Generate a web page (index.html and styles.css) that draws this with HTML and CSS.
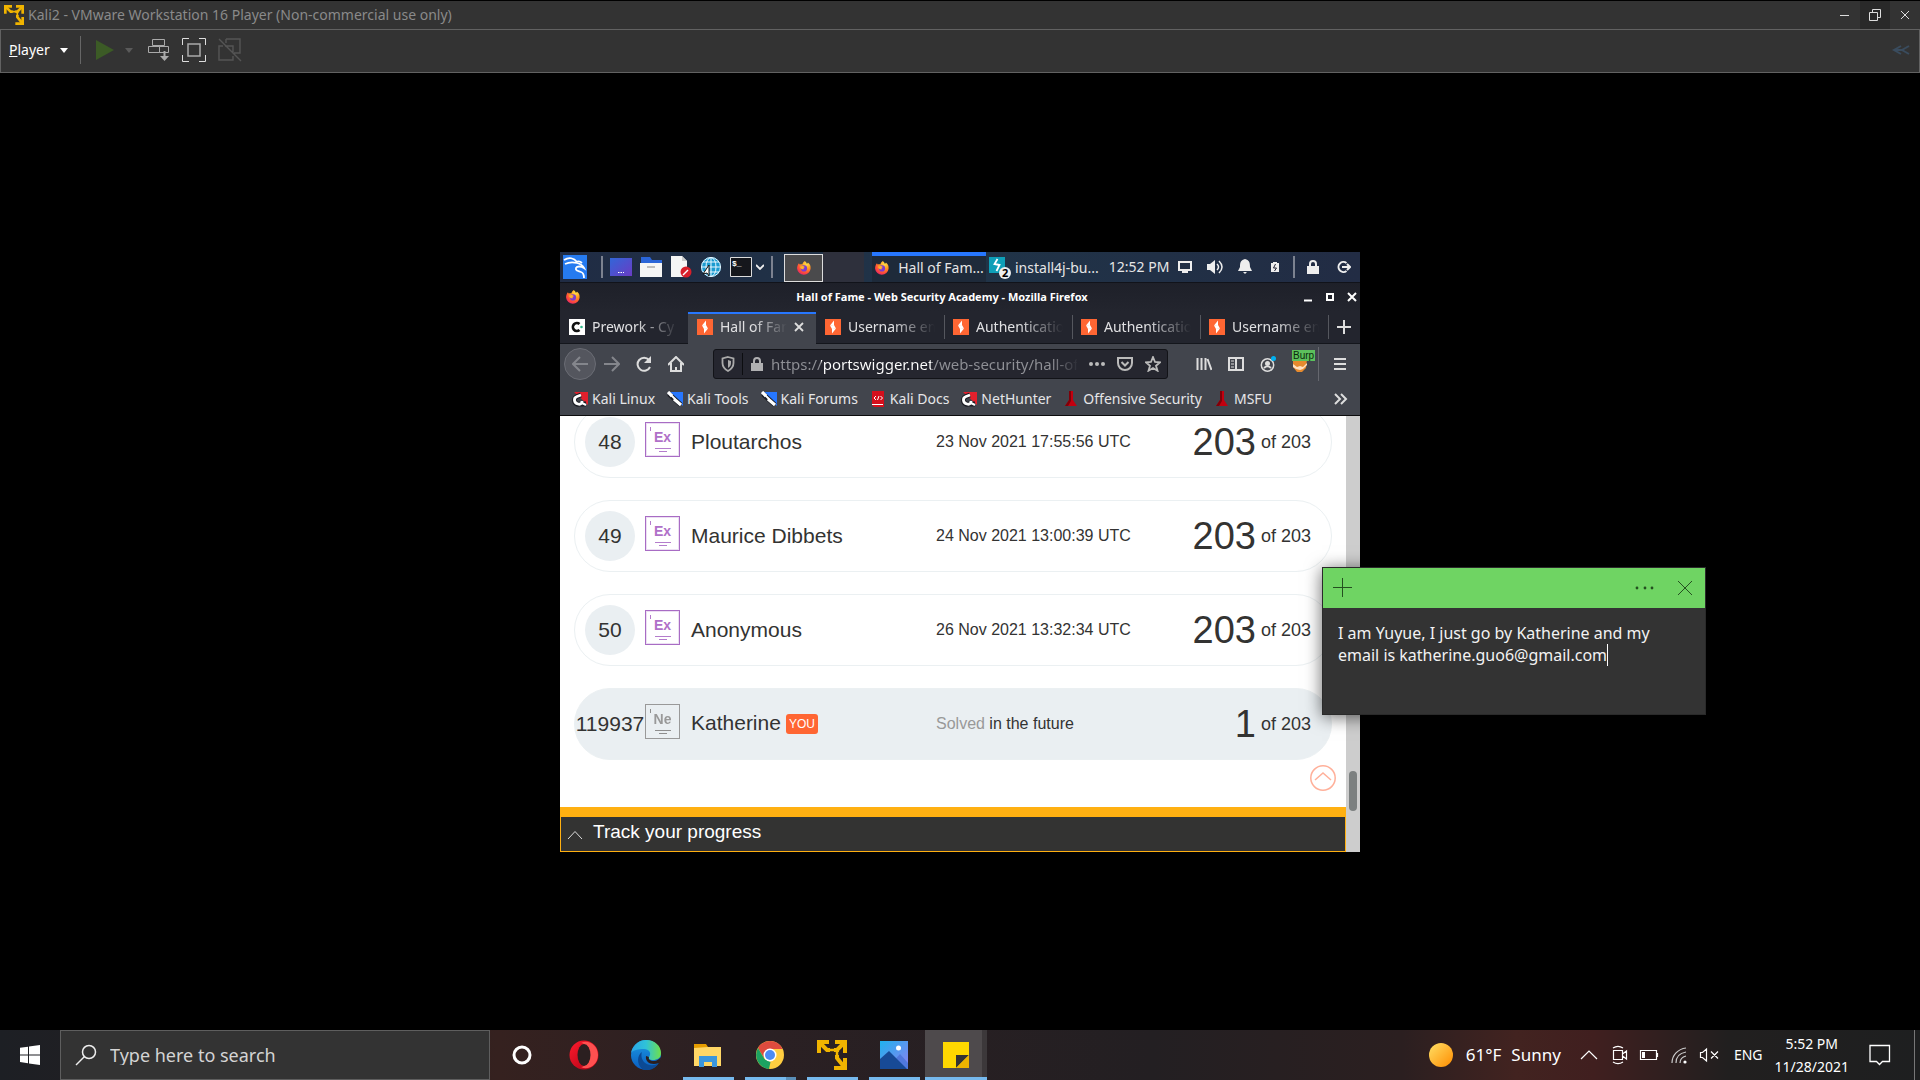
FILE: index.html
```html
<!DOCTYPE html>
<html lang="en">
<head>
<meta charset="utf-8">
<title>Kali2 - VMware Workstation 16 Player</title>
<link rel="stylesheet" href="styles.css">
</head>
<body>
<svg class="sprite" aria-hidden="true">
  <defs>
    <radialGradient id="fx-outer" cx=".7" cy=".2" r=".9"><stop offset="0" stop-color="#ffe14a"/><stop offset=".4" stop-color="#ff9a20"/><stop offset=".75" stop-color="#ff4a3a"/><stop offset="1" stop-color="#e3226e"/></radialGradient>
    <linearGradient id="desk" x2="1" y2="1"><stop offset="0" stop-color="#3266d8"/><stop offset="1" stop-color="#6a3cc4"/></linearGradient>
    <linearGradient id="opera-g" x2="1" y2="1"><stop offset="0" stop-color="#ff1b2d"/><stop offset="1" stop-color="#a70014"/></linearGradient>
    <linearGradient id="edge-top" x2="1"><stop offset="0" stop-color="#2aa5e8"/><stop offset=".5" stop-color="#2fc2d8"/><stop offset="1" stop-color="#6fe04a"/></linearGradient>
    <linearGradient id="edge-low" x2="0" y2="1"><stop offset="0" stop-color="#1d9be2"/><stop offset="1" stop-color="#0a5cc0"/></linearGradient>
    <linearGradient id="sun-g" x2="1" y2="1"><stop offset="0" stop-color="#ffe066"/><stop offset="1" stop-color="#ff8c00"/></linearGradient>
    <linearGradient id="sky" x2="1" y2="1"><stop offset="0" stop-color="#1fb2ee"/><stop offset="1" stop-color="#8d7ff0"/></linearGradient>
    <symbol id="vmware" viewBox="0 0 30 30"><g fill="none" stroke="#f0b400" stroke-width="4"><path d="M2 13V2h10M18 2h10v11M28 18v10H17"/><path d="M2 2l8 8h3M17 10h3l8-8M20 10v2M20 15v3l8 10"/><path d="M12 10h6M20 11v6" stroke-width="2.500"/></g></symbol>
    <symbol id="firefox" viewBox="0 0 16 16"><path d="M8.800 1c1.200.8 1.700 1.800 1.900 2.800.8-.1 1.200-.8 1.200-1.300 2 1.400 3 3.500 2.700 6.200A6.800 6.800 0 0 1 1.100 8.700C.9 6.500 1.700 4.400 3 3.200c.1.600.4 1 .8 1.400.9-.5 1.800-.4 2.500 0C6.700 3 7.500 1.800 8.800 1z" fill="url(#fx-outer)"/><circle cx="8" cy="8.400" r="3.100" fill="#7a3bd0"/><path d="M4.200 6.500C6 5.400 8 6 9 7.200 7.800 7 7.200 8 8 9.200c-2 .6-4-.6-3.800-2.700z" fill="#ffb02a"/></symbol>
    <symbol id="burp" viewBox="0 0 16 16"><path fill="#ff6633" d="M0 0h16v16H0z"/><path d="M9 1.500v5H5zM7 14.500v-5h4z" fill="#fff"/><path d="M5 6.500L9 6l2 3.500-4 .5z" fill="#fff"/></symbol>
    <symbol id="tools" viewBox="0 0 16 16"><path d="M2 1h14v14z" fill="#2777ff"/><path d="M2 3l12 11" stroke="#1b1d24" stroke-width="5"/><path d="M1 1l4 4M7 8l7 6" stroke="#fff" stroke-width="3.200"/><path d="M4 4l4 4" stroke="#fff" stroke-width="2"/></symbol>
    <symbol id="hunter" viewBox="0 0 16 16"><path d="M2 1h14v13z" fill="#e3202c"/><path d="M9 4L5 5.500a4 4 0 0 0 3 7.500l6 0" fill="none" stroke="#1b1d24" stroke-width="5"/><path d="M9 4L5 5.500C1 7 2 12 6 13c3 1 4-1 4-3" fill="none" stroke="#fff" stroke-width="2.800"/><path d="M10 12l4 2" stroke="#fff" stroke-width="2"/></symbol>
    <symbol id="offsec" viewBox="0 0 16 16"><path d="M6 0h4v9l4 6H2l4-6z" fill="#c2000f"/><path d="M6 0h2v10l-3 5H2l4-6z" fill="#7e0009"/></symbol>
  </defs>
</svg>

<header class="vm-head">
  <div class="vm-title">
    <svg class="i20"><use href="#vmware"/></svg>
    <h1>Kali2 - VMware Workstation 16 Player (Non-commercial use only)</h1>
    <div class="win-buttons">
      <button aria-label="Minimize"><svg class="i12" viewBox="0 0 12 12"><path d="M1 6.500h9"/></svg></button>
      <button class="restore" aria-label="Restore"><svg class="i12" viewBox="0 0 12 12"><path d="M.5 3.500h8v8h-8zM3.500 3V.5h8v8H9"/></svg></button>
      <button aria-label="Close"><svg class="i12" viewBox="0 0 12 12"><path d="M2 2l8 8M10 2l-8 8"/></svg></button>
    </div>
  </div>
  <div class="vm-tools">
    <button class="player"><span><u>P</u>layer</span><i class="caret"></i></button>
    <button class="play" aria-label="Power on"><svg width="18" height="20" viewBox="0 0 18 20"><path d="M0 0l18 10L0 20z" fill="#3c5b26"/></svg><i class="caret dim"></i></button>
    <button aria-label="Send Ctrl+Alt+Del"><svg width="22" height="24" viewBox="0 0 22 24" fill="none" stroke="#aaa"><path d="M4.500 1.500h12v6h-12zM.5 8.500h11v6H.5zM11.500 8.500h9v6h-9z"/><path d="M16.500 13v6" stroke-width="2"/><path d="M12 18h9l-4.500 5z" fill="#aaa" stroke="none"/></svg></button>
    <button aria-label="Full screen"><svg width="24" height="24" viewBox="0 0 24 24" fill="none" stroke="#ddd"><path d="M.5 7V.5H7M17 .5h6.500V7M23.500 17v6.500H17M7 23.500H.5V17"/><path d="M6 6h12v12H6z" stroke-width="1.500" stroke="#aaa"/></svg></button>
    <button aria-label="Unity"><svg width="24" height="24" viewBox="0 0 24 24" fill="none" stroke="#555" stroke-width="1.400"><path d="M1 1l22 22M8 1h14v14h-6M5 8H1v14h14v-4M8 5V1M7 8h8v7"/></svg></button>
    <svg class="collapse" width="18" height="12" viewBox="0 0 18 12" fill="none" stroke="#3a4c5e" stroke-width="2"><path d="M9 2L2 6l7 4M17 2l-7 4 7 4M3 6h9"/></svg>
  </div>
</header>

<main class="stage">
  <div class="guest">
    <div class="panel">
      <button class="launch" aria-label="Applications"><svg class="i24" viewBox="0 0 24 24"><path fill="#267bf0" d="M0 0h24v24H0z"/><g fill="none" stroke="#fff" stroke-width="1.800"><path d="M1 5c5-3 10-2 13 2M2 9c4-2 8-2 12-1 4 1 6 3 7 5-3-2-7-2-8 0-1 3 3 3 5 4 3 1 3 4 3 6"/><path d="M13 7c2-1 4-1 6 1"/></g></svg></button>
      <i class="bar"></i>
      <button class="launch" aria-label="Show desktop"><svg width="22" height="18" viewBox="0 0 22 18"><path fill="url(#desk)" d="M0 0h22v18H0z"/><path d="M8 14.500h6" stroke="#fff" stroke-dasharray="1.500 1"/></svg></button>
      <button class="launch" aria-label="Files"><svg width="24" height="20" viewBox="0 0 24 20"><path fill="#2a65d8" d="M2 0h9l2 3h10v8H2z"/><path fill="#f5f5f5" d="M1 6h22v14H1z"/><path d="M8 10h8" stroke="#aaa" stroke-width="1.500"/></svg></button>
      <button class="launch" aria-label="Text editor"><svg width="22" height="22" viewBox="0 0 22 22"><path fill="#f5f5f5" d="M1 0h11l5 5v16H1z"/><path fill="#ccc" d="M12 0l5 5h-5z"/><circle cx="16" cy="16" r="5.500" fill="#d81f2a"/><path d="M13 19l5-5" stroke="#fff" stroke-width="1.500"/></svg></button>
      <button class="launch" aria-label="Web browser"><svg width="22" height="22" viewBox="0 0 22 22"><circle cx="11" cy="11" r="10" fill="#1b9bd0"/><g fill="none" stroke="#e8f6ff"><circle cx="11" cy="11" r="9.500"/><ellipse cx="11" cy="11" rx="5" ry="9.500"/><path d="M11 1v20M1 11h20M3 6h16M3 16h16"/></g><path d="M9 9v11l-2-3-4 1z" fill="#fff" stroke="#111"/></svg></button>
      <button class="launch" aria-label="Terminal"><svg width="22" height="20" viewBox="0 0 22 20"><path d="M.5.5h21v19H.5z" fill="#15171c" stroke="#ddd"/><text x="2" y="9" class="mini-mono">$_</text></svg></button>
      <button class="chev" aria-label="More terminals"><svg width="8" height="6" viewBox="0 0 8 6" fill="none" stroke="#eee" stroke-width="1.800"><path d="M0 1l4 4 4-4"/></svg></button>
      <i class="bar"></i>
      <button class="space-now" aria-label="Firefox window"><svg class="i16"><use href="#firefox"/></svg></button>
      <div class="space-next"></div>
      <button class="task on"><svg class="i16"><use href="#firefox"/></svg><span>Hall of Fam...</span></button>
      <button class="task"><svg width="22" height="22" viewBox="0 0 22 22"><path fill="#0e9fb8" d="M0 0h16v16H0z"/><path d="M8.500 2L5.500 7l5 1-3 6" fill="none" stroke="#fff" stroke-width="1.800"/><circle cx="16" cy="16" r="6" fill="#eee"/><text x="13" y="20" class="mini-badge">2</text></svg><span>install4j-bu...</span></button>
      <time>12:52 PM</time>
      <div class="panel-tray">
        <svg class="i16" viewBox="0 0 16 16"><path d="M2 3h12v8H2z" fill="none" stroke="#eee" stroke-width="2"/><path d="M5 13h6" stroke="#eee" stroke-width="2"/></svg>
        <svg class="i16" viewBox="0 0 16 16"><path d="M0 5h3l5-4v14l-5-4H0z" fill="#eee"/><path d="M10 5c2 2 2 4 0 6M12 2c4 4 4 8 0 12" fill="none" stroke="#eee" stroke-width="1.500"/></svg>
        <svg class="i16" viewBox="0 0 16 16"><path d="M8 0c4 1 5 3 5 8l2 4H1l2-4c0-5 1-7 5-8zM6 13h4l-2 2z" fill="#eee"/></svg>
        <svg class="i16" viewBox="0 0 16 16"><path d="M5 4h1V3h4v1h2v9H4V4z" fill="#eee"/><path d="M8.500 5L6.500 9h3l-2 3" fill="none" stroke="#223"/></svg>
      </div>
      <i class="bar"></i>
      <div class="panel-tray">
        <svg class="i16" viewBox="0 0 16 16"><path d="M2 7h12v8H2z" fill="#eee"/><path d="M5 8V5a3 3 0 0 1 6 0v3" fill="none" stroke="#eee" stroke-width="2"/></svg>
        <svg class="i16" viewBox="0 0 16 16"><path d="M11.500 4a5 5 0 1 0 0 8M7 8h8M12 5l3 3-3 3" fill="none" stroke="#eee" stroke-width="2"/></svg>
      </div>
    </div>

    <div class="ff-title">
      <svg class="i16"><use href="#firefox"/></svg>
      <h2>Hall of Fame - Web Security Academy - Mozilla Firefox</h2>
      <div class="ff-buttons">
        <button aria-label="Minimize"><svg class="i10" viewBox="0 0 10 10"><path d="M1 8.500h8"/></svg></button>
        <button aria-label="Maximize"><svg class="i10" viewBox="0 0 10 10"><path d="M2 2h6v6H2z"/></svg></button>
        <button aria-label="Close"><svg class="i10" viewBox="0 0 10 10"><path d="M1 1l8 8M9 1L1 9"/></svg></button>
      </div>
    </div>

    <div class="tabs">
      <button class="tab"><svg class="i16" viewBox="0 0 16 16"><path fill="#fff" d="M0 0h16v16H0z"/><path d="M10.500 5a4 4 0 1 0 0 6" fill="none" stroke="#111" stroke-width="2.600"/><circle cx="12.500" cy="8" r="1.300" fill="#2fb98a"/></svg><span>Prework - Cy</span></button>
      <button class="tab current"><svg class="i16"><use href="#burp"/></svg><span>Hall of Fame</span><svg class="x" width="10" height="10" viewBox="0 0 10 10"><path d="M1 1l8 8M9 1L1 9" stroke="#ddd" stroke-width="1.800"/></svg></button>
      <button class="tab"><svg class="i16"><use href="#burp"/></svg><span>Username en</span></button>
      <button class="tab sep"><svg class="i16"><use href="#burp"/></svg><span>Authentication</span></button>
      <button class="tab sep"><svg class="i16"><use href="#burp"/></svg><span>Authentication</span></button>
      <button class="tab sep"><svg class="i16"><use href="#burp"/></svg><span>Username en</span></button>
      <button class="new-tab" aria-label="New tab"><svg width="14" height="14" viewBox="0 0 14 14"><path d="M7 0v14M0 7h14" stroke="#ddd" stroke-width="2"/></svg></button>
    </div>

    <div class="nav">
      <button class="back" aria-label="Back"><svg class="i16" viewBox="0 0 16 16"><path d="M16 8H1M8 1L1 8l7 7"/></svg></button>
      <button class="forward" aria-label="Forward"><svg class="i16" viewBox="0 0 16 16"><path d="M0 8h15M8 1l7 7-7 7"/></svg></button>
      <button aria-label="Reload"><svg class="i16" viewBox="0 0 16 16"><path d="M14 11a6.500 6.500 0 1 1-1-7"/><path d="M15 0v7H8z" fill="#ddd" stroke="none"/></svg></button>
      <button aria-label="Home"><svg class="i16" viewBox="0 0 16 16"><path d="M0 9l8-8 8 8M3 7v8h10V7M8 15v-4"/></svg></button>
      <div class="url">
        <svg class="i16" viewBox="0 0 16 16"><path d="M8 1l5.500 1.500V7c0 4-2 6-5.500 8-3.500-2-5.500-4-5.500-8V2.500z" fill="none" stroke="#aaa" stroke-width="1.800"/><path d="M8 4v8c2-1 3-3 3-5V5z" fill="#aaa"/></svg>
        <i></i>
        <svg class="i16" viewBox="0 0 16 16"><path d="M2 7h12v8H2z" fill="#b0b0b2"/><path d="M5 8V5a3 3 0 0 1 6 0v3" fill="none" stroke="#b0b0b2" stroke-width="2"/></svg>
        <input type="text" aria-label="Address" value="https://portswigger.net/web-security/hall-of-fame">
        <svg class="i16" viewBox="0 0 16 16" fill="#bbb"><circle cx="2" cy="8" r="2"/><circle cx="8" cy="8" r="2"/><circle cx="14" cy="8" r="2"/></svg>
        <svg class="i16" viewBox="0 0 16 16" fill="none" stroke="#bbb" stroke-width="2"><path d="M1 2h14v5a7 7 0 0 1-14 0zM4.500 6L8 9.500 11.500 6"/></svg>
        <svg class="i16" viewBox="0 0 16 16" fill="none" stroke="#bbb" stroke-width="1.800"><path d="M8 1l2 5 5 .3-4 3.400 1.500 5L8 12l-4.500 2.700 1.500-5-4-3.400L6 6z"/></svg>
      </div>
      <button aria-label="Library"><svg class="i16" viewBox="0 0 16 16"><path d="M1.500 2v12M5.500 2v12M9.500 2v12M11.500 3l4 11"/></svg></button>
      <button aria-label="Sidebars"><svg class="i16" viewBox="0 0 16 16"><path d="M1 2h14v12H1zM8 2v12" /><path d="M3 5h3M3 8h3M3 11h3" stroke-width="1"/></svg></button>
      <button aria-label="Account"><svg class="i16" viewBox="0 0 16 16"><circle cx="7.500" cy="9" r="6.200" stroke-width="1.500"/><circle cx="7.500" cy="7.500" r="2.500" fill="#ddd" stroke="none"/><path d="M4 12c2-2 5-2 7 0" /><circle cx="13.500" cy="2.500" r="2.500" fill="#00b0f0" stroke="none"/></svg></button>
      <button class="ext" aria-label="Burp proxy"><svg class="i16" viewBox="0 0 16 16"><path d="M1 3h14l-1 9-4 4H5l-4-5z" fill="#e58a2e" stroke="none"/><path d="M1 8l4 3 3-1 3 1 4-4v2l-4 4-3 1-4-1-3-2z" fill="#ffe0c0" stroke="none"/></svg><b>Burp</b></button>
      <i class="nav-bar"></i>
      <button aria-label="Menu"><svg class="i16" viewBox="0 0 16 16"><path d="M2 3h12M2 8h12M2 13h12"/></svg></button>
    </div>

    <nav class="marks">
      <a href="#"><svg class="i16"><use href="#hunter"/></svg>Kali Linux</a>
      <a href="#"><svg class="i16"><use href="#tools"/></svg>Kali Tools</a>
      <a href="#"><svg class="i16"><use href="#tools"/></svg>Kali Forums</a>
      <a href="#"><svg class="i16" viewBox="0 0 16 16"><path d="M2 0h12v16H4l-2-2z" fill="#d40f1c"/><path d="M2 13.500h11" stroke="#fff"/><path d="M6 5L4 7l2 2M9 5l-1.500 4M10.500 5l2 2-2 2" stroke="#fff" fill="none"/></svg>Kali Docs</a>
      <a href="#"><svg class="i16"><use href="#hunter"/></svg>NetHunter</a>
      <a href="#"><svg class="i16"><use href="#offsec"/></svg>Offensive Security</a>
      <a href="#"><svg class="i16"><use href="#offsec"/></svg>MSFU</a>
      <button aria-label="More bookmarks"><svg width="14" height="12" viewBox="0 0 14 12" fill="none" stroke="#ddd" stroke-width="2"><path d="M1 1l5 5-5 5M7 1l5 5-5 5"/></svg></button>
    </nav>

    <div class="view">
      <div class="page">
        <div class="board-clip">
          <table class="board">
            <tbody>
            <tr><td class="rank"><span>48</span></td><td><span class="level"><b>Ex</b></span></td><td class="name">Ploutarchos</td><td class="date">23 Nov 2021 17:55:56 UTC</td><td class="score"><strong>203</strong> of 203</td></tr>
            <tr><td class="rank"><span>49</span></td><td><span class="level"><b>Ex</b></span></td><td class="name">Maurice Dibbets</td><td class="date">24 Nov 2021 13:00:39 UTC</td><td class="score"><strong>203</strong> of 203</td></tr>
            <tr><td class="rank"><span>50</span></td><td><span class="level"><b>Ex</b></span></td><td class="name">Anonymous</td><td class="date">26 Nov 2021 13:32:34 UTC</td><td class="score"><strong>203</strong> of 203</td></tr>
            <tr class="me"><td class="rank"><span>119937</span></td><td><span class="level"><b>Ne</b></span></td><td class="name">Katherine<mark>YOU</mark></td><td class="date"><em>Solved</em> in the future</td><td class="score"><strong>1</strong> of 203</td></tr>
            </tbody>
          </table>
          <button class="to-top" aria-label="Back to top"><svg width="26" height="26" viewBox="0 0 26 26" fill="none" stroke="#ffb09a" stroke-width="1.500"><circle cx="13" cy="13" r="12.200"/><path d="M5 15l8-7 8 7"/></svg></button>
        </div>
        <button class="track"><svg width="16" height="10" viewBox="0 0 16 10" fill="none" stroke="#ddd"><path d="M1 9l7-7.500L15 9"/></svg><span>Track your progress</span></button>
      </div>
      <div class="scroll"><i></i></div>
    </div>
  </div>

  <section class="note" aria-label="Sticky note">
    <div class="note-head">
      <button aria-label="New note"><svg width="20" height="20" viewBox="0 0 20 20"><path d="M9.500 0v19M0 9.500h19"/></svg></button>
      <button class="more" aria-label="Menu"><svg width="20" height="20" viewBox="0 0 20 20"><g fill="#245020" stroke="none"><circle cx="2" cy="10" r="1.400"/><circle cx="10" cy="10" r="1.400"/><circle cx="17" cy="10" r="1.400"/></g></svg></button>
      <button aria-label="Close note"><svg width="20" height="20" viewBox="0 0 20 20"><path d="M3 3l14 14M17 3L3 17"/></svg></button>
    </div>
    <div class="note-body">
      <textarea aria-label="Note text" rows="2" spellcheck="false">I am Yuyue, I just go by Katherine and my email is katherine.guo6@gmail.com</textarea>
      <i class="cursor"></i>
    </div>
  </section>
</main>

<footer class="taskbar">
  <button class="start" aria-label="Start"><svg width="20" height="20" viewBox="0 0 20 20" fill="#fff"><path d="M0 2.800L8 1.700V9.400H0zM9 1.500L20 0v9.400H9zM0 10.400h8v7.800l-8-1.100zM9 10.400h11V20L9 18.400z"/></svg></button>
  <label class="search"><svg width="22" height="22" viewBox="0 0 22 22" fill="none" stroke="#eee" stroke-width="1.500"><circle cx="14" cy="8" r="6.500"/><path d="M9.500 12.500L1 21"/></svg><input type="search" placeholder="Type here to search" aria-label="Search"></label>
  <div class="apps">
    <button aria-label="Cortana"><svg width="20" height="20" viewBox="0 0 20 20"><circle cx="10" cy="10" r="8" fill="none" stroke="#fff" stroke-width="3"/></svg></button>
    <button aria-label="Opera"><svg class="i30" viewBox="0 0 30 30"><ellipse cx="15" cy="15" rx="14.500" ry="14.500" fill="url(#opera-g)"/><path d="M12 3c7-4 17 2 17 12s-10 16-17 12c9 0 9-24 0-24z" fill="#ff5050"/><ellipse cx="15" cy="15" rx="6.500" ry="11" fill="#2b1f20"/></svg></button>
    <button aria-label="Edge"><svg class="i30" viewBox="0 0 30 30"><circle cx="15" cy="15" r="15" fill="url(#edge-low)"/><path d="M0 13C2 4 9 0 15 0c9 0 15 6 15 13 0 5-4 7-8 7-3 0-5-1-4-3 3-4 0-8-5-8C7 9 2 10 0 13z" fill="url(#edge-top)"/><path d="M11 12c-2 5 1 12 8 13 4 1 7-1 9-2-4 6-10 8-15 7C6 27 5 16 11 12z" fill="#0c4a94"/><path d="M18 17c-1 2 1 4 5 4 3 0 5-2 7-4 0 3-1 5-2 6-8 3-14-1-13-7z" fill="#2b1f20"/></svg></button>
    <button class="run" aria-label="File Explorer"><svg class="i30" viewBox="0 0 30 30"><path d="M1 4h12l2 3h12v4H1z" fill="#e59c00"/><path d="M1 8l14-1h13v19H1z" fill="#ffd766"/><path d="M6 27V16h18v11h-5v-5h-8v5z" fill="#3a96dd"/></svg></button>
    <button class="run pair" aria-label="Chrome"><svg class="i30" viewBox="0 0 30 30"><circle cx="15" cy="15" r="14" fill="#ffcd40"/><path d="M15 1a14 14 0 0 1 12.500 8H15L9 18 3 8A14 14 0 0 1 15 1z" fill="#dd4b3e"/><path d="M3 8l6.500 11 6 3L14 29A14 14 0 0 1 3 8z" fill="#1ca261"/><circle cx="15" cy="15" r="6.500" fill="#fff"/><circle cx="15" cy="15" r="5" fill="#4c8bf5"/></svg></button>
    <button class="run" aria-label="VMware Player"><svg class="i30"><use href="#vmware"/></svg></button>
    <button class="run" aria-label="Photos"><svg class="i30" viewBox="0 0 30 30"><path fill="url(#sky)" d="M1 1h28v28H1z"/><circle cx="19.500" cy="8" r="2.500" fill="#fff"/><path d="M13 23l8-9 8 9v6H13z" fill="#5078dc"/><path d="M1 19l9-8 18 18H1z" fill="#174a96"/></svg></button>
    <button class="run open" aria-label="Sticky Notes"><svg class="i30" viewBox="0 0 30 30"><path fill="#ffd800" d="M2 2h26v26H2z"/><path fill="#333" d="M15 15h13L15 28z"/><path fill="#eeb400" d="M28 15v13H15z"/></svg></button>
  </div>
  <div class="weather"><svg width="24" height="24" viewBox="0 0 24 24"><circle cx="12" cy="12" r="12" fill="url(#sun-g)"/></svg><span>61°F</span><span>Sunny</span></div>
  <div class="tray">
    <svg class="i20" viewBox="0 0 20 20"><path d="M2 14l8-8 8 8"/></svg>
    <svg class="i20" viewBox="0 0 20 20"><path d="M4.500 5.500h9v9h-9zM13.500 9l4-3v8l-4-3M4 3c3-2 7-2 10 0M4 17c3 2 7 2 10 0"/></svg>
    <svg class="i20" viewBox="0 0 20 20"><path d="M1.500 5.500h16v9h-16zM18.500 8v4"/><path d="M3 7h3v6H3z" fill="#fff" stroke="none"/></svg>
    <svg class="i20" viewBox="0 0 20 20"><path d="M3 18C3 10 9 4 17 3M7 18c0-6 4-10 10-11M11 18c0-4 2-6 6-7" stroke="#ccc"/><circle cx="16" cy="17" r="1.600" fill="#fff" stroke="none"/></svg>
    <svg class="i20" viewBox="0 0 20 20"><path d="M1.500 7.500h2l4-3.500v12l-4-3.500h-2zM12 6.500l7 7M19 6.500l-7 7"/></svg>
  </div>
  <span class="lang">ENG</span>
  <div class="clock"><time>5:52 PM</time><time>11/28/2021</time></div>
  <button class="inbox" aria-label="Notifications"><svg width="22" height="22" viewBox="0 0 22 22" fill="none" stroke="#fff" stroke-width="1.300"><path d="M1 1.500h19.500v16h-7L10.500 20.500l-3-3H1z"/></svg></button>
  <i class="peek"></i>
</footer>
</body>
</html>
```
FILE: styles.css
```css
* { box-sizing: border-box; }

body {
  margin: 0;
  min-height: 100vh;
  display: flex;
  flex-direction: column;
  background: #000;
  color: #fff;
  font: 14px/20px "Noto Sans", sans-serif;
}

button {
  display: inline-flex;
  align-items: center;
  justify-content: center;
  padding: 0;
  border: 0;
  background: none;
  color: inherit;
  font: inherit;
}

input, textarea { border: 0; outline: 0; padding: 0; background: none; font: inherit; }
h1, h2 { margin: 0; font: inherit; }
svg { flex: none; display: block; }

.sprite { position: absolute; width: 0; height: 0; }
.i10 { width: 10px; height: 10px; }
.i12 { width: 12px; height: 12px; }
.i16 { width: 16px; height: 16px; }
.i20 { width: 20px; height: 20px; }
.i24 { width: 24px; height: 24px; }
.i30 { width: 30px; height: 30px; }

/* Player window */
.vm-head { border-top: 1px solid #000; background: #333; }
.vm-title {
  display: flex;
  align-items: center;
  gap: 4px;
  height: 28px;
  padding-left: 4px;
  color: #8a8a8a;
}
.win-buttons { display: flex; align-self: stretch; margin-left: auto; }
.win-buttons button { width: 30px; }
.win-buttons svg { fill: none; stroke: #ddd; }
.win-buttons .restore { background: #292929; }

.vm-tools {
  display: flex;
  align-items: center;
  gap: 12px;
  height: 44px;
  padding: 0 9px 2px 8px;
  border: 1px solid #626262;
}
.vm-tools .player {
  gap: 10px;
  height: 28px;
  padding-right: 12px;
  border-right: 1px solid #666;
}
.vm-tools .play { gap: 11px; padding: 0 3px; }
.caret { border: 4px solid transparent; border-top: 5px solid #fff; border-bottom: 0; }
.caret.dim { border-top-color: #5a5a5a; }
.collapse { margin-left: auto; }

.stage {
  position: relative;
  flex: 1;
  display: grid;
  place-items: center;
}

/* Guest desktop */
.guest { width: 800px; max-width: 100%; background: #42454d; }

.panel {
  display: flex;
  align-items: center;
  height: 31px;
  border-bottom: 1px solid #11131a;
  background: linear-gradient(90deg, #202c44, #203448 50%, #222c44);
  color: #e6e6e6;
  white-space: nowrap;
}
.panel > * { flex: none; }
.launch { width: 30px; }
.launch:first-child { margin-right: 11px; }
.bar { width: 2px; height: 22px; background: #7c8290; }
.bar + .launch { margin-left: 3px; }
.mini-mono { font: bold 8px "Liberation Mono", monospace; fill: #fff; }
.mini-badge { font: bold 11px "Noto Sans", sans-serif; fill: #000; }
.chev { width: 8px; margin-right: 7px; }
.space-now {
  align-self: stretch;
  width: 39px;
  margin: 2px 0 0 11px;
  border: 1px solid #ddd;
  background: #4a4a4c;
}
.space-next { align-self: stretch; width: 41px; background: #2e303c; }
.task { align-self: stretch; gap: 4px; padding: 0 3px; border-top: 4px solid transparent; border-bottom: 2px solid transparent; }
.task.on { gap: 8px; width: 114px; margin-left: 8px; padding: 0; border-top-color: #2777ff; background: #1e2a3a; }
.panel time { margin: 0 8px 0 7px; }
.panel-tray { display: flex; gap: 14px; }
.panel .panel-tray + .bar { margin: 0 10px; }

.ff-title {
  display: flex;
  align-items: center;
  height: 28px;
  padding: 0 3px 0 5px;
  background: linear-gradient(#1e2029, #23252e);
}
.ff-title h2 { flex: 1; text-align: center; font-size: 11px; font-weight: 700; }
.ff-buttons { display: flex; gap: 12px; }
.ff-buttons svg { fill: none; stroke: #fff; stroke-width: 2; }

.tabs { display: flex; height: 33px; background: #23252e; border-bottom: 1px solid #14161c; color: #e0e0e2; }
.tab {
  flex: 0 1 128px;
  min-width: 0;
  justify-content: flex-start;
  gap: 7px;
  padding: 0 9px;
  position: relative;
}
.tab span {
  flex: 1;
  overflow: hidden;
  text-align: left;
  white-space: nowrap;
  -webkit-mask-image: linear-gradient(90deg, #000 50%, transparent);
  mask-image: linear-gradient(90deg, #000 50%, transparent);
}
.tab.current { margin-top: 1px; margin-bottom: -1px; padding: 0 12px 3px 9px; border-top: 2px solid #2777ff; background: #42454d; }
.tab.sep::before, .new-tab::before {
  content: "";
  position: absolute;
  left: 0;
  width: 1px;
  height: 24px;
  background: #55575e;
}
.new-tab { flex: 1; position: relative; }

.nav { display: flex; align-items: center; height: 40px; padding: 0 4px; }
.nav > button { width: 32px; height: 32px; }
.nav > button svg { fill: none; stroke: #ddd; stroke-width: 2; }
.nav .back { border: 1px solid #6a6c74; border-radius: 50%; background: #54565e; }
.nav .back svg, .nav .forward svg { stroke: #84868c; }
.url {
  flex: 1;
  display: flex;
  align-items: center;
  gap: 6px;
  min-width: 0;
  height: 30px;
  margin: 0 20px 0 21px;
  padding: 0 6px;
  border: 1px solid #121318;
  border-radius: 3px;
  background: #25262f;
}
.url i { width: 1px; height: 22px; background: #0c0d10; }
/* host name is drawn brighter than the rest of the address */
.url input {
  flex: 1;
  min-width: 0;
  height: 22px;
  background: linear-gradient(90deg, #8f9096 50px, #fff 50px 160px, #8f9096 160px 280px, transparent 308px);
  -webkit-background-clip: text;
  background-clip: text;
  color: transparent;
  font-size: 15px;
}
.url input ~ svg { margin-left: 6px; }
.nav .ext { position: relative; }
.ext b {
  position: absolute;
  top: 2px;
  left: 8px;
  padding: 0 1px;
  background: #5cc05c;
  color: #0b2a0b;
  font: 10px/11px "Liberation Sans", sans-serif;
}
.nav-bar { width: 1px; height: 34px; margin: 0 5px 0 2px; background: #66686f; }

.marks { display: flex; align-items: center; gap: 12px; height: 32px; padding: 0 12px; border-bottom: 1px solid #0c0c0d; }
.marks a { display: flex; align-items: center; gap: 4px; color: #e6e6e8; text-decoration: none; white-space: nowrap; }
.marks button { margin-left: auto; }

/* Hall of fame page */
.view { display: flex; height: 436px; }
.page { flex: 1; display: flex; flex-direction: column; min-width: 0; background: #fff; color: #333332; font-family: "Liberation Sans", Arial, sans-serif; }
.board-clip {
  position: relative;
  flex: 1;
  min-height: 0;
  display: flex;
  flex-direction: column;
  justify-content: flex-end;
  overflow: hidden;
  padding: 0 14px 47px;
}
.board, .board tbody { display: flex; flex-direction: column; gap: 22px; }
.board tr {
  display: grid;
  grid-template-columns: 70px 46px 245px 1fr auto;
  align-items: center;
  height: 72px;
  padding-right: 20px;
  border: 1px solid #ebf0f2;
  border-radius: 36px;
}
.board td { padding: 0; }
.board .me { background: #eaeff2; }
.rank { display: flex; justify-content: flex-start; font-size: 21px; }
.rank span { display: grid; place-items: center; width: 50px; height: 50px; margin-left: 10px; border-radius: 50%; background: #eaeff2; }
.me .rank span { width: 70px; margin-left: 0; background: none; }
.level {
  display: flex;
  flex-direction: column;
  align-items: center;
  justify-content: center;
  width: 35px;
  height: 35px;
  margin-bottom: 5px;
  border: 1px solid #a86cc4;
  background: linear-gradient(#b47ccc, #b47ccc) 50% 25px / 16px 1px no-repeat, linear-gradient(#b47ccc, #b47ccc) 50% 28px / 8px 1px no-repeat, linear-gradient(#b47ccc, #b47ccc) 4px 4px / 1px 4px no-repeat;
  box-shadow: inset 0 0 0 1px #ecdff3;
  color: #b070c8;
  font-size: 14px;
  line-height: 16px;
}
.level b { padding-bottom: 4px; }
.me .level { border-color: #999; color: #999; box-shadow: none; filter: grayscale(1); }
.name { font-size: 21px; }
.name mark {
  margin-left: 5px;
  padding: 3px;
  border-radius: 3px;
  background: #ff6633;
  color: #fff;
  font-size: 12px;
  vertical-align: 2px;
}
.date { font-size: 16px; }
.date em { color: #999; font-style: normal; }
.score { display: flex; align-items: center; gap: 5px; font-size: 18px; }
.score strong { font-size: 38px; line-height: 44px; font-weight: 400; }
.to-top { position: absolute; right: 10px; bottom: 16px; }
.track {
  justify-content: flex-start;
  gap: 10px;
  height: 45px;
  padding: 0 6px 4px;
  border: 1px solid #ffb011;
  border-top-width: 10px;
  background: #333332;
  color: #fff;
  font-size: 19px;
}
.track svg { margin-top: 6px; }
.scroll { width: 14px; padding: 355px 3px 0; background: #cdcdcd; }
.scroll i { display: block; height: 40px; border-radius: 4px; background: #7c8080; }

/* Sticky note window */
.note {
  position: absolute;
  top: 494px;
  right: 214px;
  width: 384px;
  border: 1px solid #2a2a2a;
  background: #333;
  box-shadow: 0 2px 16px rgba(0, 0, 0, .6);
}
.note-head { display: flex; align-items: center; gap: 20px; height: 40px; padding: 0 10px; background: #6fd463; }
.note-head svg { fill: none; stroke: #245020; }
.note-head .more { margin-left: auto; }
.note-body { position: relative; padding: 14px 15px; }
.note-body textarea { display: block; width: 100%; height: 78px; resize: none; color: #f2f2f2; font-size: 16px; line-height: 22px; overflow: hidden; }
.cursor { position: absolute; top: 36px; left: 284px; width: 1px; height: 22px; background: #fff; }

/* Host taskbar */
.taskbar {
  display: flex;
  align-items: stretch;
  height: 50px;
  background: linear-gradient(90deg, #1d1f24, #241f22 12%, #35211f 26%, #2b2023 38%, #231f22 60%, #2b1f20 73%, #422320 79%, #401f1f 83%, #211f1f 90%, #1e1f20);
}
.start { width: 60px; }
.search {
  flex: 0 1 430px;
  display: flex;
  align-items: center;
  gap: 13px;
  padding: 0 14px;
  border: 1px solid #5e5e5e;
  background: #333;
}
.search input { flex: 1; min-width: 0; color: #ddd; font-size: 18px; }
.search input::placeholder { color: #d4d4d4; opacity: 1; }
.apps { display: flex; padding-left: 1px; }
.apps button { width: 62px; position: relative; }
.apps .run::after { content: ""; position: absolute; bottom: 0; left: 6px; right: 5px; height: 3px; background: #76b9ed; }
.apps .pair::after { background: linear-gradient(90deg, #76b9ed 41px, #5a8fb8 41px); }
.apps .open { background: linear-gradient(90deg, #4e4a4c 57px, #3c383a 57px); }
.apps .open::after { left: 0; right: 0; }
.weather { display: flex; align-items: center; gap: 10px; margin-left: auto; font-size: 17px; }
.weather svg { margin-right: 3px; }
.tray { display: flex; align-items: center; gap: 10px; margin: 0 15px 0 18px; }
.tray svg { fill: none; stroke: #fff; stroke-width: 1.2; }
.lang { align-self: center; }
.clock { display: flex; flex-direction: column; justify-content: center; align-items: center; margin: 0 20px 0 12px; line-height: 23px; }
.inbox { width: 22px; }
.peek { width: 6px; margin-left: 23px; border-left: 1px solid #777; }
```
